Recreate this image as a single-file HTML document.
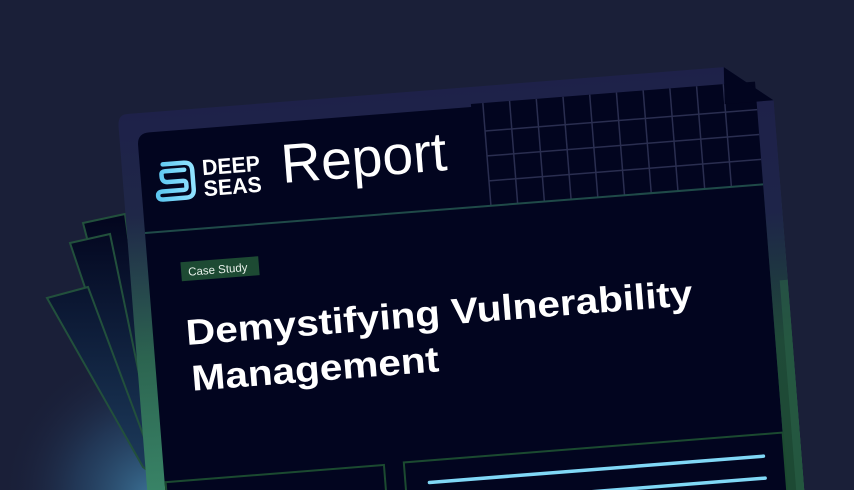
<!DOCTYPE html>
<html><head><meta charset="utf-8"><style>
html,body{margin:0;padding:0;background:#1a1f38;overflow:hidden;width:854px;height:490px}
svg{display:block}
</style></head><body>
<svg width="854" height="490" viewBox="0 0 854 490" xmlns="http://www.w3.org/2000/svg">
<defs>
<radialGradient id="glow" cx="150" cy="495" r="150" gradientUnits="userSpaceOnUse">
<stop offset="0" stop-color="#3a6f93"/><stop offset="0.5" stop-color="#27476a" stop-opacity="0.6"/><stop offset="1" stop-color="#1a1f38" stop-opacity="0"/>
</radialGradient>
<linearGradient id="paper" x1="0" y1="220" x2="0" y2="470" gradientUnits="userSpaceOnUse">
<stop offset="0" stop-color="#03061f"/><stop offset="1" stop-color="#1c3a5a"/>
</linearGradient>
<linearGradient id="frame" x1="0" y1="113" x2="0" y2="520" gradientUnits="userSpaceOnUse">
<stop offset="0" stop-color="#1e2149"/><stop offset="0.25" stop-color="#1f2748"/><stop offset="0.6" stop-color="#2c6450"/><stop offset="1" stop-color="#3b8a6b"/>
</linearGradient>
<linearGradient id="rframe" x1="0" y1="150" x2="0" y2="520" gradientUnits="userSpaceOnUse">
<stop offset="0" stop-color="#1e2149"/><stop offset="0.3" stop-color="#1e2449"/><stop offset="0.65" stop-color="#1f4a38"/><stop offset="1" stop-color="#1d4a34"/>
</linearGradient>
<linearGradient id="logo" x1="0" y1="0" x2="1" y2="0">
<stop offset="0" stop-color="#5cc6f0"/><stop offset="1" stop-color="#8fe2ff"/>
</linearGradient>
</defs>
<rect width="854" height="490" fill="#1a1f38"/>
<rect width="854" height="490" fill="url(#glow)"/>
<polygon points="83,223 125,214 160,470 143,452" fill="url(#paper)" stroke="#22503c" stroke-width="2"/>
<polygon points="70,243 110,234 160,475 143,460" fill="url(#paper)" stroke="#22503c" stroke-width="2"/>
<polygon points="47,298 88,287 160,480 143,467" fill="url(#paper)" stroke="#22503c" stroke-width="2"/>

<g transform="rotate(-4.5 145 233)">
<path d="M136,113 H735 L782,150 V560 H127 V125 Q127,113 136,113 Z" fill="url(#frame)"/>
<path d="M765,150 H782 V560 H765 Z" fill="url(#rframe)"/>
<rect x="774" y="330" width="8" height="230" fill="#2a6048" opacity="0.6"/>
<path d="M157,133 H480 V130 H765 V560 H145 V145 Q145,133 157,133 Z" fill="#02051f"/>
<g stroke="#2a2e50" stroke-width="1.5" fill="none">
<line x1="492" y1="130" x2="492" y2="233"/>
<line x1="518.8" y1="130" x2="518.8" y2="233"/>
<line x1="545.6" y1="130" x2="545.6" y2="233"/>
<line x1="572.4" y1="130" x2="572.4" y2="233"/>
<line x1="599.2" y1="130" x2="599.2" y2="233"/>
<line x1="626" y1="130" x2="626" y2="233"/>
<line x1="652.8" y1="130" x2="652.8" y2="233"/>
<line x1="679.6" y1="130" x2="679.6" y2="233"/>
<line x1="706.4" y1="130" x2="706.4" y2="233"/>
<line x1="733.2" y1="130" x2="733.2" y2="233"/>
<line x1="492" y1="158" x2="765" y2="158"/>
<line x1="492" y1="183" x2="765" y2="183"/>
<line x1="492" y1="208" x2="765" y2="208"/>
</g>
<polygon points="735,113 782,150 733,150" fill="#02051f"/>
<line x1="145" y1="233" x2="765" y2="233" stroke="#1f4a48" stroke-width="2"/>
<path d="M168,166 H189 Q197,166 197,174 V193 Q197,201 189,201 H166 Q161,201 161,197 Q161,193 166,193 H187 Q190,193 190,190 V187 Q190,184 187,184 H172 Q166,184 166,178 V176 Q166,173 170,173 H189" fill="none" stroke="url(#logo)" stroke-width="4.5" stroke-linecap="round" stroke-linejoin="round"/>
<text x="207" y="180" font-family="Liberation Sans, sans-serif" font-weight="bold" font-size="22" fill="#fff" textLength="58" lengthAdjust="spacingAndGlyphs">DEEP</text>
<text x="207" y="201" font-family="Liberation Sans, sans-serif" font-weight="bold" font-size="22" fill="#fff" textLength="58" lengthAdjust="spacingAndGlyphs">SEAS</text>
<text x="286" y="194" font-family="Liberation Sans, sans-serif" font-size="55" fill="#fff" textLength="166" lengthAdjust="spacingAndGlyphs">Report</text>
<rect x="178" y="265" width="78" height="19" fill="#1d4a33"/>
<text x="185" y="279" font-family="Liberation Sans, sans-serif" font-size="11.5" fill="#e8f0ea">Case Study</text>
<text x="178" y="348" font-family="Liberation Sans, sans-serif" font-weight="bold" font-size="36" fill="#fff" textLength="508" lengthAdjust="spacingAndGlyphs">Demystifying Vulnerability</text>
<text x="180" y="394" font-family="Liberation Sans, sans-serif" font-weight="bold" font-size="36" fill="#fff" textLength="248" lengthAdjust="spacingAndGlyphs">Management</text>
<rect x="146" y="483" width="219" height="80" fill="none" stroke="#1b4a30" stroke-width="2"/>
<rect x="385" y="482" width="380" height="80" fill="none" stroke="#1b4a30" stroke-width="2"/>
<line x1="409" y1="504" x2="744" y2="504" stroke="#80d8f6" stroke-width="3.5" stroke-linecap="round"/>
<line x1="409" y1="526" x2="744" y2="526" stroke="#80d8f6" stroke-width="3.5" stroke-linecap="round"/>
</g>
</svg>
</body></html>
